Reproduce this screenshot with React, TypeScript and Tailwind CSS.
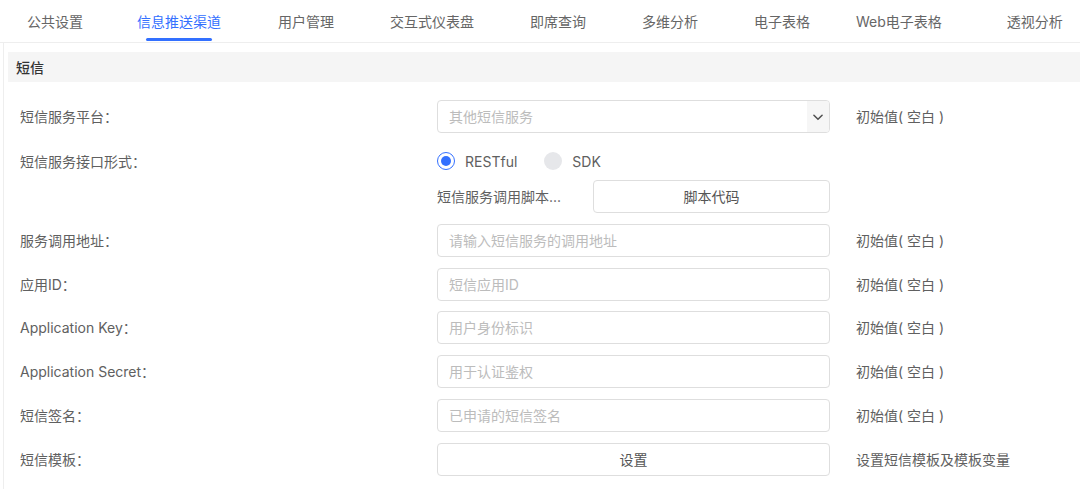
import React from "react";

const tabs: { t: string; c: string }[] = [
  { t: "公共设置", c: "" },
  { t: "信息推送渠道", c: "ml-[54px]" },
  { t: "用户管理", c: "ml-[57px]" },
  { t: "交互式仪表盘", c: "ml-[56px]" },
  { t: "即席查询", c: "ml-[56px]" },
  { t: "多维分析", c: "ml-[56px]" },
  { t: "电子表格", c: "ml-[56px]" },
  { t: "Web电子表格", c: "ml-[46px]" },
  { t: "透视分析", c: "ml-[65px]" },
];

function Label({ children }: { children: React.ReactNode }) {
  return (
    <div className="w-[417px] shrink-0 text-[14px] text-[#606060] whitespace-nowrap">{children}</div>
  );
}

function Note({ children }: { children: React.ReactNode }) {
  return <div className="ml-[26px] text-[14px] text-[#606060] whitespace-nowrap">{children}</div>;
}

function InputRow({ label, placeholder }: { label: string; placeholder: string }) {
  return (
    <div className="flex items-center h-[33px] mt-[10.8px]">
      <Label>{label}</Label>
      <div className="w-[393px] h-[33px] shrink-0 border border-[#dedede] rounded-[4px] flex items-center px-[11px] text-[14px] text-[#bcbcbc]">
        {placeholder}
      </div>
      <Note>初始值( 空白 )</Note>
    </div>
  );
}

export default function App() {
  return (
    <div className="w-[1080px] h-[489px] bg-white overflow-hidden font-['Inter','Noto_Sans_CJK_SC',sans-serif]">
      {/* Tabs */}
      <div className="h-[43px] flex items-stretch border-b border-[#eeeeee] pl-[27px] whitespace-nowrap">
        {tabs.map((tab, i) => (
          <div
            key={tab.t}
            className={
              i === 1
                ? "relative flex items-center text-[14px] text-[#3370ff] " + tab.c
                : "relative flex items-center text-[14px] text-[#666666] " + tab.c
            }
          >
            {tab.t}
            {i === 1 && (
              <div className="absolute left-1/2 -translate-x-1/2 bottom-[1px] w-[66px] h-[3px] rounded-full bg-[#3370ff]" />
            )}
          </div>
        ))}
      </div>

      {/* Panel */}
      <div className="ml-[3px] border-l border-[#eeeeee] pl-[4px] pt-[9px] h-[446px]">
        <div className="h-[30px] bg-[#f5f5f5] flex items-center pl-[8px] text-[14px] font-medium text-[#333333]">
          短信
        </div>

        <div className="pl-[12px] pt-[18px]">
          {/* Platform select */}
          <div className="flex items-center h-[33px]">
            <Label>短信服务平台：</Label>
            <div className="w-[393px] h-[33px] shrink-0 border border-[#dedede] rounded-[4px] flex items-center justify-between pl-[11px] text-[14px] text-[#bcbcbc] overflow-hidden">
              <span>其他短信服务</span>
              <div className="w-[22px] h-full bg-[#f6f6f6] flex items-center justify-center">
                <svg width="14" height="14" viewBox="0 0 24 24" fill="none" stroke="#505050" strokeWidth="2.6" strokeLinecap="round" strokeLinejoin="round">
                  <path d="M5 9l7 7 7-7" />
                </svg>
              </div>
            </div>
            <Note>初始值( 空白 )</Note>
          </div>

          {/* Radio row */}
          <div className="flex items-center h-[34px] mt-[11px]">
            <Label>短信服务接口形式：</Label>
            <div className="flex items-center text-[14px] text-[#606060]">
              <div className="w-[18px] h-[18px] rounded-full border border-[#3370ff] flex items-center justify-center">
                <div className="w-[10px] h-[10px] rounded-full bg-[#3370ff]" />
              </div>
              <span className="ml-[10px]">RESTful</span>
              <div className="ml-[27px] w-[18px] h-[18px] rounded-full bg-[#e6e7ea]" />
              <span className="ml-[10px]">SDK</span>
            </div>
          </div>

          {/* Script row */}
          <div className="flex items-center h-[33px] mt-[2px]">
            <div className="w-[417px] shrink-0" />
            <div className="w-[393px] shrink-0 flex items-center">
              <span className="text-[14px] text-[#606060] w-[156px] shrink-0 whitespace-nowrap">短信服务调用脚本...</span>
              <div className="flex-1 h-[33px] border border-[#dedede] rounded-[4px] flex items-center justify-center text-[14px] text-[#555555]">
                脚本代码
              </div>
            </div>
          </div>

          <InputRow label="服务调用地址：" placeholder="请输入短信服务的调用地址" />
          <InputRow label="应用ID：" placeholder="短信应用ID" />
          <InputRow label="Application Key：" placeholder="用户身份标识" />
          <InputRow label="Application Secret：" placeholder="用于认证鉴权" />
          <InputRow label="短信签名：" placeholder="已申请的短信签名" />

          <div className="flex items-center h-[33px] mt-[10.8px]">
            <Label>短信模板：</Label>
            <div className="w-[393px] h-[33px] shrink-0 border border-[#dedede] rounded-[4px] flex items-center justify-center text-[14px] text-[#555555]">
              设置
            </div>
            <Note>设置短信模板及模板变量</Note>
          </div>
        </div>
      </div>
    </div>
  );
}
